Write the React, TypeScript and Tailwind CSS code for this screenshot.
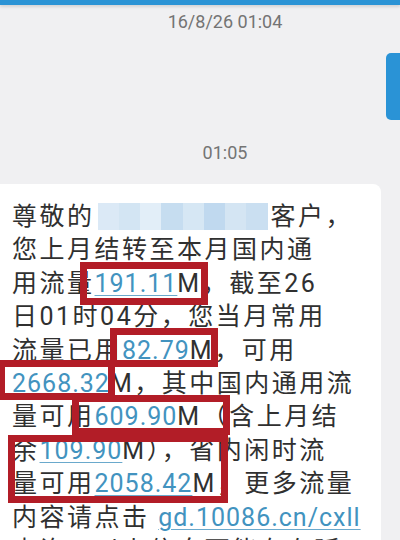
import React from "react"

const font = "font-['Roboto','Noto_Sans_CJK_SC',sans-serif]"

function Num({ children }: { children: React.ReactNode }) {
  return (
    <span className="text-[#4293bf] underline decoration-1 decoration-[#6aa9cc] underline-offset-[3px] tracking-[1px]">
      {children}
    </span>
  )
}

// blurred phone number
function Blur() {
  const cells = ["#dbe9f6", "#d3e5f3", "#e2eef8", "#c6ddf0", "#d6e7f4", "#c0d9ef", "#d4e5f3", "#cadff1"]
  return (
    <span className="inline-flex h-[27px] w-[170px] align-[-5px] mx-[3px] overflow-hidden">
      {cells.map((c, i) => (
        <span key={i} className="flex-1 h-full" style={{ backgroundColor: c }} />
      ))}
    </span>
  )
}

function Box({ cls }: { cls: string }) {
  return <div className={"absolute border-[7px] border-[#b21d27] " + cls} />
}

export default function App() {
  return (
    <div className={"w-[400px] h-[540px] overflow-hidden bg-[#f0f0f2] flex flex-col " + font}>
      <div className="h-[5px] bg-[#2b93d5] shadow-[0_2px_3px_rgba(0,0,0,0.12)] shrink-0" />

      <div className="mt-[7px] pl-[50px] flex justify-center text-[18px] leading-[20px] text-[#747474]">
        16/8/26 01:04
      </div>

      <div className="mt-[21px] flex justify-end">
        <div className="w-[14px] h-[67px] bg-[#2a93d6] rounded-l-[5px]" />
      </div>

      <div className="mt-[23px] pl-[50px] flex justify-center text-[18px] leading-[20px] text-[#747474]">
        01:05
      </div>

      <div className="relative mt-[21px] w-[381px] bg-white rounded-tr-[8px] pt-[16px] pl-[12px] text-[25px] leading-[33.4px] text-[#303030] tracking-[2.5px] whitespace-nowrap">
        <div>尊敬的<Blur />客户，</div>
        <div>您上月结转至本月国内通</div>
        <div>用流量<Num>191.11</Num>M，截至26</div>
        <div>日01时04分，您当月常用</div>
        <div>流量已用<Num>82.79</Num>M，可用</div>
        <div><Num>2668.32</Num>M，其中国内通用流</div>
        <div>量可用<Num>609.90</Num>M（含上月结</div>
        <div>余<Num>109.90</Num>M），省内闲时流</div>
        <div>量可用<Num>2058.42</Num>M，更多流量</div>
        <div>内容请点击 <Num>gd.10086.cn/cxll</Num></div>
        <div>查询，以上信息可能存在延</div>

        <Box cls="left-[80px] top-[78px] w-[128px] h-[43px]" />
        <Box cls="left-[110px] top-[144px] w-[108px] h-[39px]" />
        <Box cls="left-[-2px] top-[176px] w-[117px] h-[40px]" />
        <Box cls="left-[72px] top-[211px] w-[158px] h-[40px]" />
        <Box cls="left-[8px] top-[251px] w-[220px] h-[68px]" />
      </div>
    </div>
  )
}
